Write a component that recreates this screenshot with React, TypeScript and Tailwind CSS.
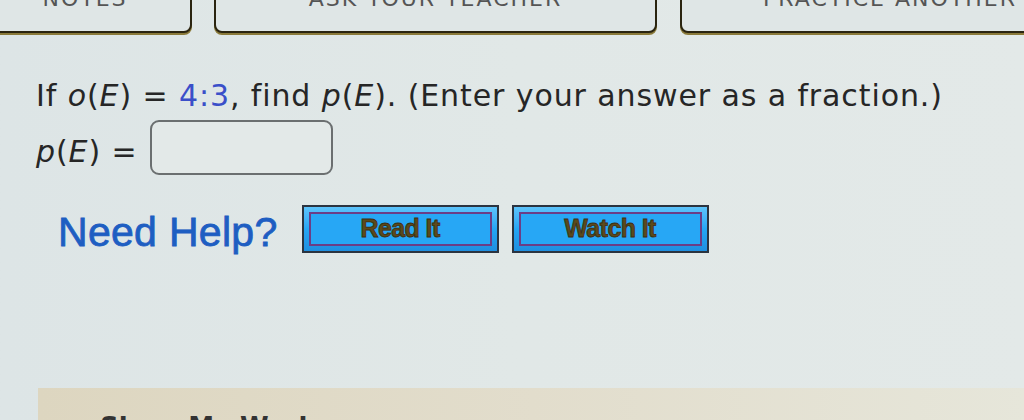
import React from 'react';

const tabs = [
  { label: 'NOTES', cls: 'w-[214px] -ml-[22px] mr-[22px]' },
  { label: 'ASK YOUR TEACHER', cls: 'w-[443px] mr-[23px]' },
  { label: 'PRACTICE ANOTHER', cls: 'w-[420px]' },
];

function HelpButton({ label, className }: { label: string; className?: string }) {
  return (
    <button
      className={`h-[48px] w-[197px] border-2 border-[#2b3440] bg-gradient-to-b from-[#5cc3fb] via-[#25a6f4] to-[#1f8fe0] p-[5px] ${className ?? ''}`}
    >
      <span className="flex h-full w-full items-center justify-center border-2 border-[#6b3d86] bg-[#27a7f5]">
        <span
          className="text-[25px] font-bold tracking-[-0.6px] text-[#5b4a1c] [-webkit-text-stroke:0.8px_#3d2d10]"
          style={{ fontFamily: '"Liberation Sans", Arial, sans-serif' }}
        >
          {label}
        </span>
      </span>
    </button>
  );
}

export default function App() {
  return (
    <div
      className="relative h-[420px] w-[1024px] overflow-hidden bg-gradient-to-r from-[#dde5e6] via-[#e1e8e7] to-[#e3e9e8]"
      style={{ fontFamily: '"DejaVu Sans", Verdana, sans-serif' }}
    >
      {/* top tab buttons, cut off */}
      <div className="-mt-[30px] flex">
        {tabs.map((t) => (
          <div
            key={t.label}
            className={`flex h-[63px] shrink-0 items-start justify-center rounded-b-[8px] border-[2.5px] border-[#2a2410] bg-[#dfe6e6] pt-[10px] shadow-[0_2px_0_#8a7a3a] ${t.cls}`}
          >
            <span className="text-[22px] tracking-[2px] text-[#555]">{t.label}</span>
          </div>
        ))}
      </div>

      {/* question */}
      <div className="ml-[36px] mt-[45px] text-[30px] leading-[36px] tracking-[0.9px] text-[#262626]">
        <p>
          If <i>o</i>(<i>E</i>) = <span className="text-[#3a4fc9]">4:3</span>, find <i>p</i>(<i>E</i>). (Enter your answer as a fraction.)
        </p>
        <div className="mt-[-4px] flex items-center">
          <span className="pt-[18px]">
            <i>p</i>(<i>E</i>) =
          </span>
          <div className="ml-[12px] mt-[10px] h-[55px] w-[183px] rounded-[9px] border-2 border-[#6b6f70] bg-[#e3e9e8]" />
        </div>
      </div>

      {/* need help */}
      <div className="ml-[58px] mt-[30px] flex items-center">
        <span
          className="pt-[6px] text-[41px] leading-none tracking-[0.3px] text-[#1e5ec2] [-webkit-text-stroke:0.8px_#1e5ec2]"
          style={{ fontFamily: '"Liberation Sans", Arial, sans-serif' }}
        >
          Need Help?
        </span>
        <HelpButton label="Read It" className="ml-[24px]" />
        <HelpButton label="Watch It" className="ml-[13px]" />
      </div>

      {/* bottom panel */}
      <div className="absolute left-[38px] right-0 top-[388px] h-[40px] bg-gradient-to-r from-[#ddd6c0] via-[#e2ddcc] to-[#e6e6da] pl-[62px] pt-[20px]">
        <span className="text-[26px] font-bold text-[#333]">Show My Work</span>
      </div>
    </div>
  );
}
